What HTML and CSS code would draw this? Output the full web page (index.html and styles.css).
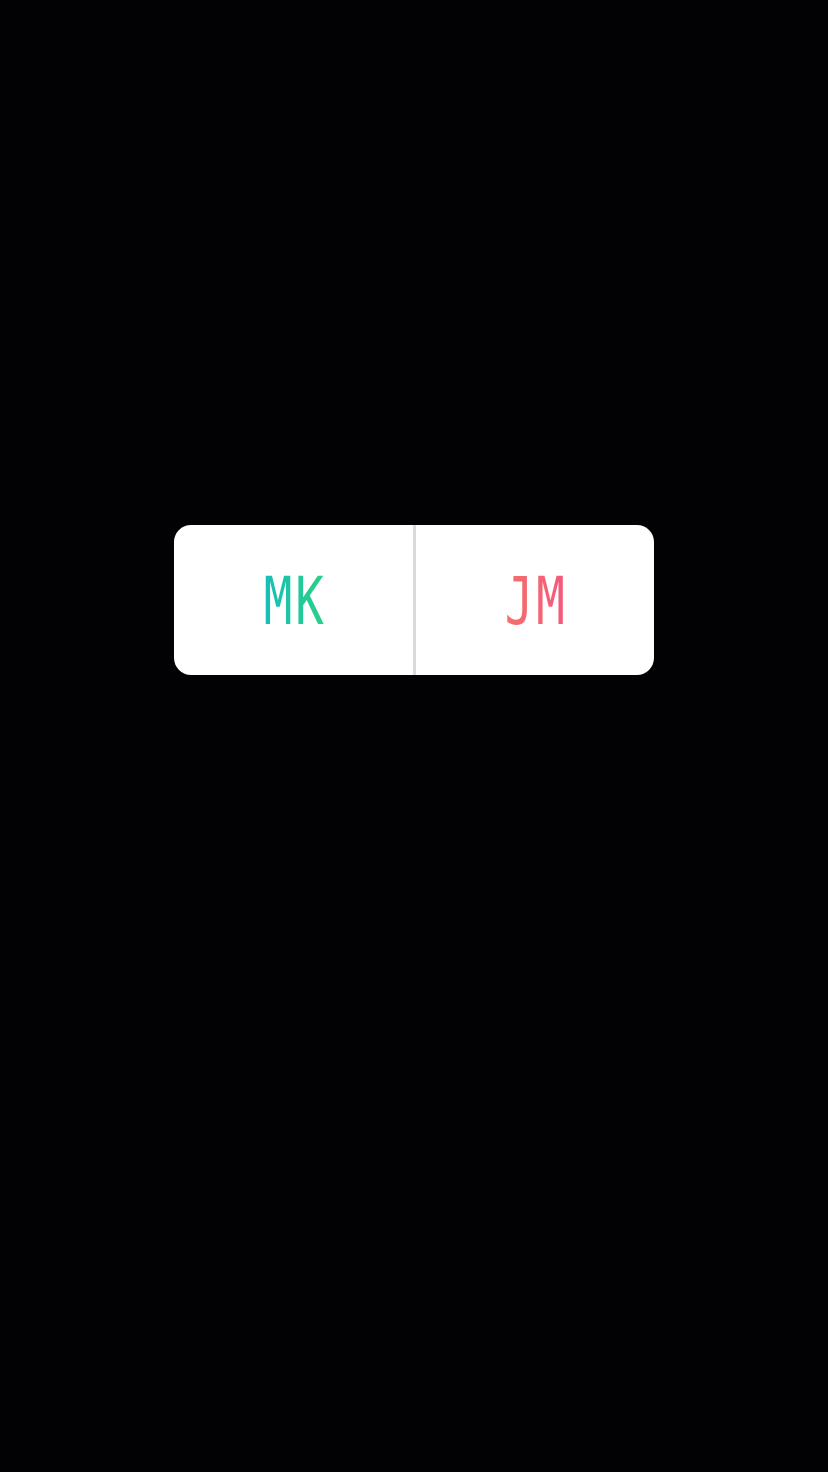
FILE: index.html
```html
<!DOCTYPE html>
<html>
<head>
<meta charset="utf-8">
<link rel="stylesheet" href="styles.css">
</head>
<body>
<div class="poll">
  <div class="option"><span class="label mk">MK</span></div>
  <div class="divider"></div>
  <div class="option"><span class="label jm">JM</span></div>
</div>
</body>
</html>
```
FILE: styles.css
```css
html, body {
  margin: 0;
  padding: 0;
  background: #020205;
  width: 828px;
  height: 1472px;
  overflow: hidden;
}
body {
  display: flex;
  justify-content: center;
  align-items: flex-start;
  padding-top: 525px;
  box-sizing: border-box;
}
.poll {
  width: 480px;
  height: 150px;
  background: #ffffff;
  border-radius: 17px;
  display: flex;
  overflow: hidden;
}
.option {
  flex: 1;
  display: flex;
  align-items: center;
  justify-content: center;
}
.divider {
  width: 3px;
  background: #d9d9d9;
}
.label {
  font-family: "DejaVu Sans Mono", monospace;
  font-size: 66px;
  line-height: 1;
  letter-spacing: 4px;
  display: inline-block;
  transform: scaleX(0.72);
  -webkit-background-clip: text;
  background-clip: text;
  color: transparent;
  padding-top: 4px;
  padding-left: 4px;
}
.mk {
  background-image: linear-gradient(90deg, #17bdbb, #2ad183);
}
.jm {
  background-image: linear-gradient(90deg, #f3716a, #f6587c);
}
```
